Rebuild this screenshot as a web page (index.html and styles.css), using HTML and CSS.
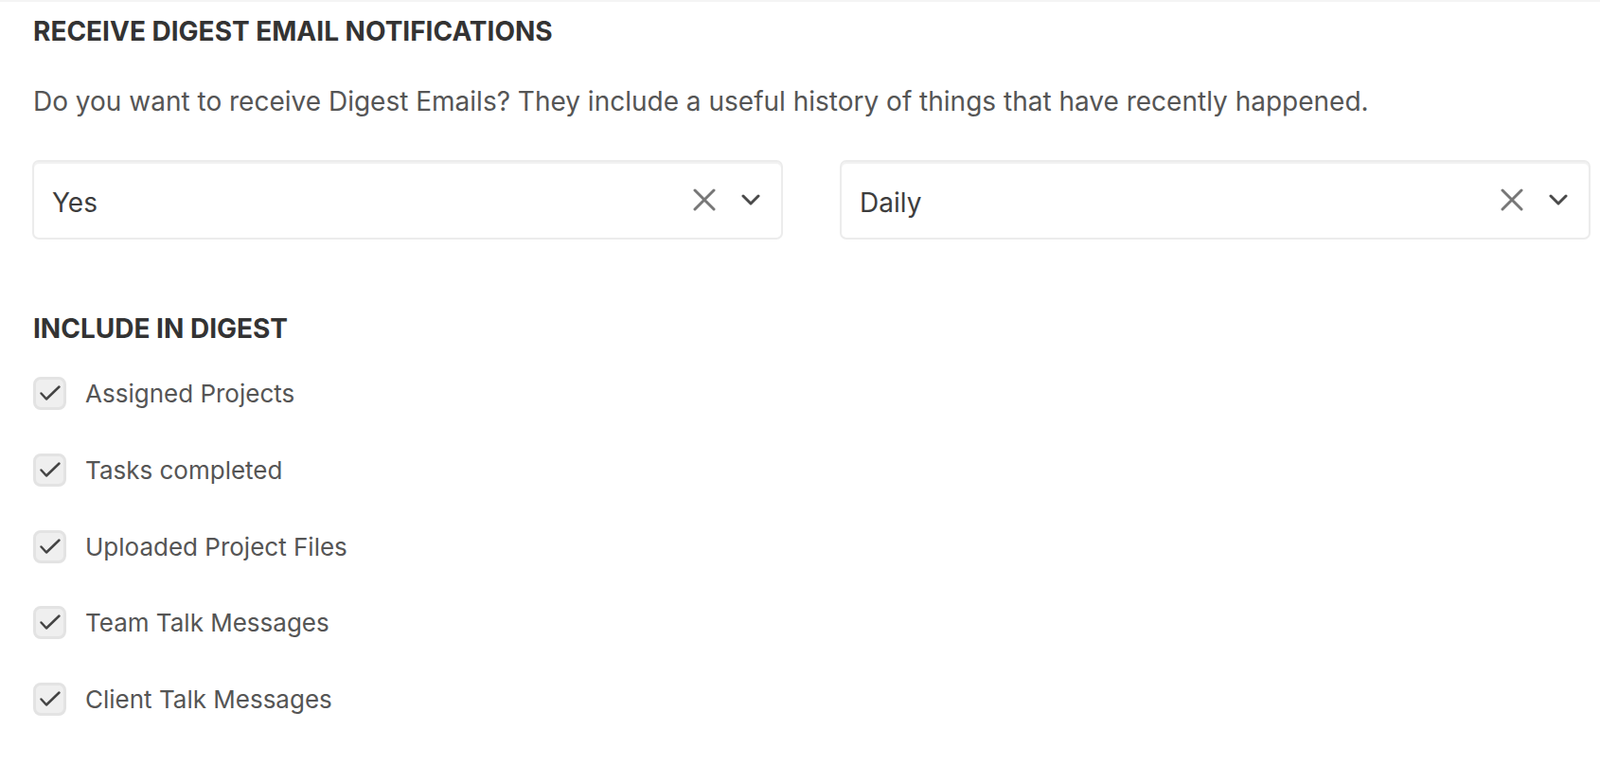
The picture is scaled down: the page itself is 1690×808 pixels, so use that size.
FILE: index.html
```html
<!DOCTYPE html>
<html lang="en">

<head>
    <meta charset="UTF-8">
    <meta name="viewport" content="width=device-width, initial-scale=1.0">
    <title>Digest settings</title>
    <link rel="stylesheet" href="styles.css">
</head>

<body>
    <div class="settings">
        <h2 class="title">RECEIVE DIGEST EMAIL NOTIFICATIONS</h2>
        <p class="desc">Do you want to receive Digest Emails? They include a useful history of things that have recently happened.</p>

        <div class="selects">
            <div class="select">
                <span class="value">Yes</span>
                <span class="clear">
                    <svg width="24" height="24" viewBox="0 0 24 24"><path d="M2 2L22 22M22 2L2 22" /></svg>
                </span>
                <span class="arrow">
                    <svg width="20" height="12" viewBox="0 0 20 12"><path d="M2 2L10 10L18 2" /></svg>
                </span>
            </div>
            <div class="select">
                <span class="value">Daily</span>
                <span class="clear">
                    <svg width="24" height="24" viewBox="0 0 24 24"><path d="M2 2L22 22M22 2L2 22" /></svg>
                </span>
                <span class="arrow">
                    <svg width="20" height="12" viewBox="0 0 20 12"><path d="M2 2L10 10L18 2" /></svg>
                </span>
            </div>
        </div>

        <h2 class="title sub">INCLUDE IN DIGEST</h2>
        <ul class="checks">
            <li>
                <span class="box"><svg width="35" height="35" viewBox="0 0 35 35"><path d="M8.5 17.5L14 23.5L27.5 10.5" /></svg></span>
                <span class="label">Assigned Projects</span>
            </li>
            <li>
                <span class="box"><svg width="35" height="35" viewBox="0 0 35 35"><path d="M8.5 17.5L14 23.5L27.5 10.5" /></svg></span>
                <span class="label">Tasks completed</span>
            </li>
            <li>
                <span class="box"><svg width="35" height="35" viewBox="0 0 35 35"><path d="M8.5 17.5L14 23.5L27.5 10.5" /></svg></span>
                <span class="label">Uploaded Project Files</span>
            </li>
            <li>
                <span class="box"><svg width="35" height="35" viewBox="0 0 35 35"><path d="M8.5 17.5L14 23.5L27.5 10.5" /></svg></span>
                <span class="label">Team Talk Messages</span>
            </li>
            <li>
                <span class="box"><svg width="35" height="35" viewBox="0 0 35 35"><path d="M8.5 17.5L14 23.5L27.5 10.5" /></svg></span>
                <span class="label">Client Talk Messages</span>
            </li>
        </ul>
    </div>
</body>

</html>
```

FILE: styles.css
```css
html,
body,
ul,
h2,
p {
    margin: 0;
    padding: 0;
}

body {
    background: #fff;
    font-family: Inter, "Noto Sans", sans-serif;
    color: #555;
}

.settings {
    border-top: 2px solid #f4f4f4;
    padding: 15px 10px 0 34px;
}

.title {
    font-size: 28px;
    font-weight: 700;
    line-height: 32px;
    color: #333;
    margin-left: 1px;
}

.desc {
    margin-top: 42px;
    margin-left: 1px;
    font-size: 28px;
    line-height: 32px;
}

.selects {
    display: grid;
    grid-template-columns: 1fr 1fr;
    gap: 60px;
    margin-top: 46px;
}

.select {
    display: flex;
    align-items: center;
    height: 84px;
    box-sizing: border-box;
    padding: 0 22px 0 19px;
    border: 2px solid #ececec;
    border-radius: 7px;
    box-shadow: inset 0 2px 1px #f1f1f1;
    font-size: 28px;
    color: #3d3d3d;
}

.select .value {
    flex: 1;
    padding-top: 6px;
}

.select svg {
    display: block;
    fill: none;
    stroke-linecap: round;
}

.clear svg {
    stroke: #777;
    stroke-width: 3;
}

.arrow {
    margin-left: 27px;
}

.arrow svg {
    stroke: #4a4a4a;
    stroke-width: 3;
    stroke-linejoin: round;
}

.sub {
    margin-top: 78px;
}

.checks {
    list-style: none;
    margin-top: 35px;
}

.checks li {
    display: flex;
    align-items: center;
    gap: 20px;
    height: 35px;
    margin-bottom: 45.75px;
    margin-left: 1px;
}

.box {
    width: 35px;
    height: 35px;
    box-sizing: border-box;
    border: 3px solid #e3e3e3;
    border-radius: 8px;
    background: #efefef;
    position: relative;
}

.box svg {
    position: absolute;
    left: -3px;
    top: -3px;
    fill: none;
    stroke: #444;
    stroke-width: 2.5;
    stroke-linecap: round;
    stroke-linejoin: round;
}

.label {
    font-size: 26px;
    color: #555;
}
```
